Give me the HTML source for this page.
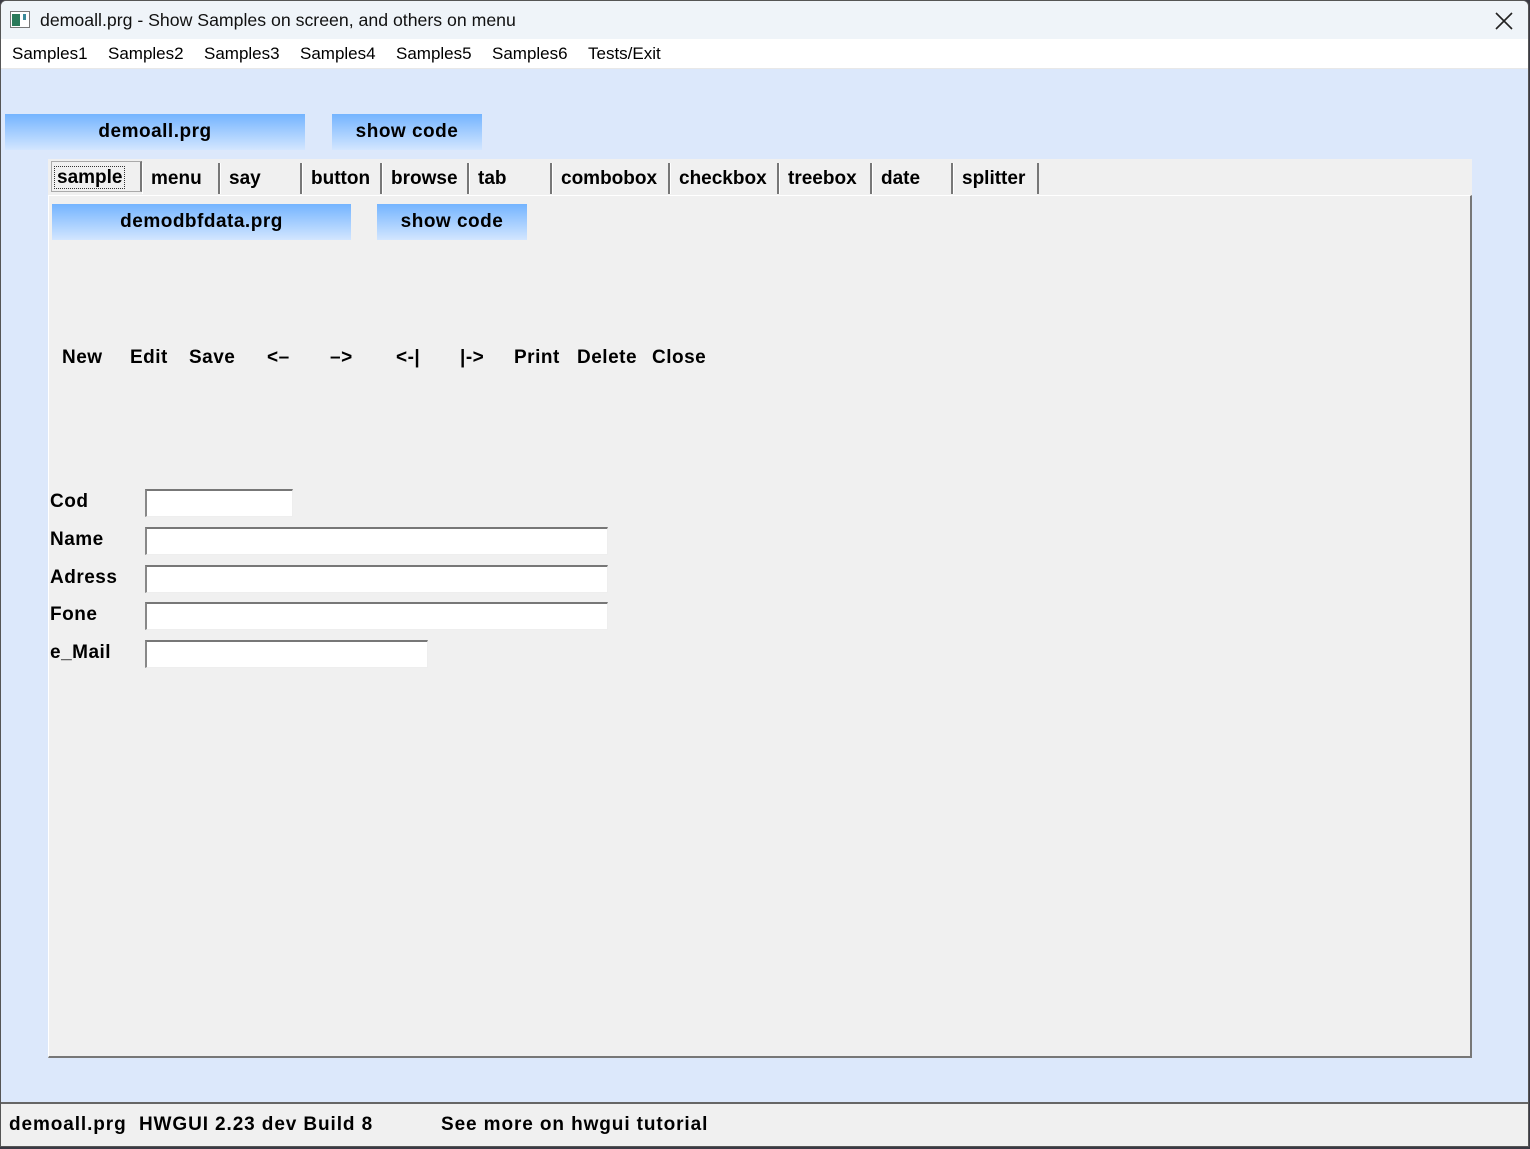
<!DOCTYPE html>
<html><head><meta charset="utf-8"><style>
*{margin:0;padding:0;box-sizing:border-box}
body{width:1530px;height:1149px;position:relative;overflow:hidden;background:#3a3a44;font-family:"Liberation Sans",sans-serif}
.win{position:absolute;left:0;top:0;width:1529px;height:1147px;background:#dce8fb;border:1px solid #555;border-radius:6px 6px 0 0;overflow:hidden}
.title{position:absolute;left:0;top:0;width:100%;height:38px;background:#eff4f9}
.menu{position:absolute;left:0;top:38px;width:100%;height:30px;background:#fff;border-bottom:1px solid #e8e8e8}
.t{position:absolute;white-space:nowrap}
.b{font-weight:bold;font-size:19px;color:#000;letter-spacing:0.5px}
.btn{position:absolute;background:linear-gradient(#74b4ff,#d3e6ff);display:flex;align-items:center;justify-content:center;font-weight:bold;font-size:19px;letter-spacing:0.5px}
.tab{position:absolute;top:163px;height:31px;border-right:2px solid #777;border-left:1px solid #fff;font-weight:bold;font-size:19px;padding-left:8px;line-height:31px;background:#f0f0f0}
.inp{position:absolute;background:#fff;border-top:2px solid #777;border-left:2px solid #888;border-right:1px solid #eee;border-bottom:1px solid #eee;height:28px}
</style></head><body>
<div class="win">
<div class="title">
 <svg style="position:absolute;left:9px;top:10px" width="20" height="17"><rect x="0.5" y="0.5" width="19" height="16" fill="#fff" stroke="#777"/><rect x="2" y="3" width="8" height="12" fill="#2a7a5a"/><rect x="13" y="3" width="3" height="6" fill="#3a8a9a"/></svg>
 <span class="t" style="left:39px;top:9px;font-size:17.7px;color:#111">demoall.prg - Show Samples on screen, and others on menu</span>
 <svg style="position:absolute;left:1494px;top:11px" width="18" height="18"><path d="M1 1L17 17M17 1L1 17" stroke="#222" stroke-width="1.6"/></svg>
</div>
<div class="menu">
 <span class="t" style="left:11px;top:5px;font-size:17px">Samples1</span>
 <span class="t" style="left:107px;top:5px;font-size:17px">Samples2</span>
 <span class="t" style="left:203px;top:5px;font-size:17px">Samples3</span>
 <span class="t" style="left:299px;top:5px;font-size:17px">Samples4</span>
 <span class="t" style="left:395px;top:5px;font-size:17px">Samples5</span>
 <span class="t" style="left:491px;top:5px;font-size:17px">Samples6</span>
 <span class="t" style="left:587px;top:5px;font-size:17px">Tests/Exit</span>
</div>
<div class="btn" style="left:4px;top:113px;width:300px;height:36px">demoall.prg</div>
<div class="btn" style="left:331px;top:113px;width:150px;height:36px">show code</div>
<div style="position:absolute;left:47px;top:158px;width:1424px;height:36px;background:#f0f0f0"></div>
<div style="position:absolute;left:47px;top:194px;width:1424px;height:863px;background:#f0f0f0;border-top:1px solid #fff;border-left:1px solid #fff;border-right:2px solid #777;border-bottom:2px solid #777"></div>
<div class="tab" style="left:50px;top:160px;width:91px;border:1px solid #aaa;border-right:2px solid #777"><span style="outline:1px dotted #333;padding:0 2px;margin-left:-5px">sample</span></div>
<div class="tab" style="left:141px;top:162px;width:78px">menu</div>
<div class="tab" style="left:219px;top:162px;width:82px">say</div>
<div class="tab" style="left:301px;top:162px;width:80px">button</div>
<div class="tab" style="left:381px;top:162px;width:87px">browse</div>
<div class="tab" style="left:468px;top:162px;width:83px">tab</div>
<div class="tab" style="left:551px;top:162px;width:118px">combobox</div>
<div class="tab" style="left:669px;top:162px;width:109px">checkbox</div>
<div class="tab" style="left:778px;top:162px;width:93px">treebox</div>
<div class="tab" style="left:871px;top:162px;width:81px">date</div>
<div class="tab" style="left:952px;top:162px;width:86px">splitter</div>
<div class="btn" style="left:51px;top:203px;width:299px;height:36px">demodbfdata.prg</div>
<div class="btn" style="left:376px;top:203px;width:150px;height:36px">show code</div>
<span class="t b" style="left:61px;top:346px">New</span>
<span class="t b" style="left:129px;top:346px">Edit</span>
<span class="t b" style="left:188px;top:346px">Save</span>
<span class="t b" style="left:266px;top:346px">&lt;–</span>
<span class="t b" style="left:329px;top:346px">–&gt;</span>
<span class="t b" style="left:395px;top:346px">&lt;-|</span>
<span class="t b" style="left:459px;top:346px">|-&gt;</span>
<span class="t b" style="left:513px;top:346px">Print</span>
<span class="t b" style="left:576px;top:346px">Delete</span>
<span class="t b" style="left:651px;top:346px">Close</span>
<span class="t b" style="left:49px;top:490px">Cod</span>
<span class="t b" style="left:49px;top:528px">Name</span>
<span class="t b" style="left:49px;top:566px">Adress</span>
<span class="t b" style="left:49px;top:603px">Fone</span>
<span class="t b" style="left:49px;top:641px">e_Mail</span>
<div class="inp" style="left:144px;top:488px;width:148px"></div>
<div class="inp" style="left:144px;top:526px;width:463px"></div>
<div class="inp" style="left:144px;top:564px;width:463px"></div>
<div class="inp" style="left:144px;top:601px;width:463px"></div>
<div class="inp" style="left:144px;top:639px;width:283px"></div>
<div style="position:absolute;left:0;top:1101px;width:100%;height:45px;background:#f0f0f0;border-top:2px solid #666"></div>
<span class="t b" style="left:8px;top:1113px;letter-spacing:0.9px">demoall.prg&nbsp; HWGUI 2.23 dev Build 8</span>
<span class="t b" style="left:440px;top:1113px;letter-spacing:0.9px">See more on hwgui tutorial</span>
</div>
</body></html>
